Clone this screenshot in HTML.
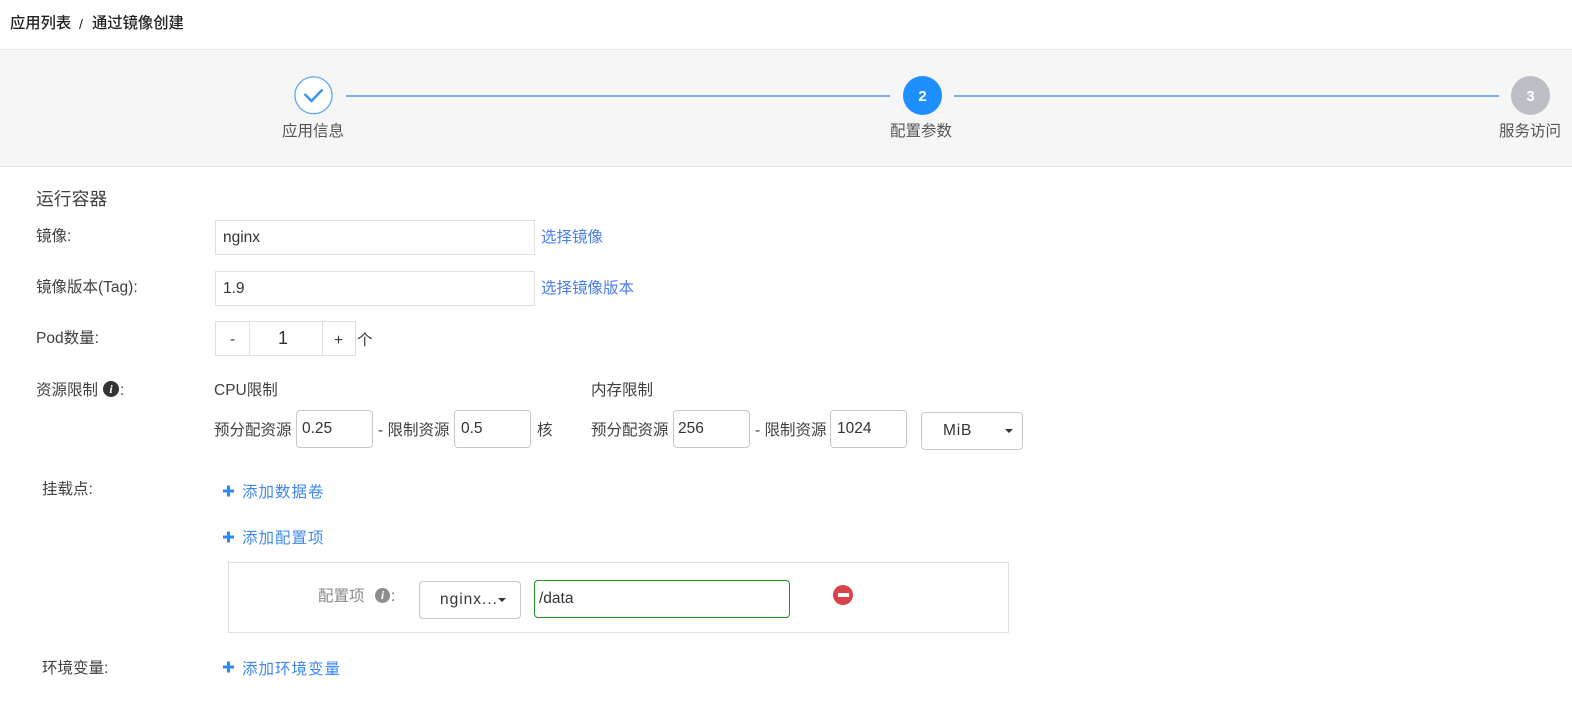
<!DOCTYPE html>
<html><head><meta charset="utf-8">
<style>
html,body{margin:0;padding:0;width:1572px;height:708px;overflow:hidden;background:#fff}
#w{position:absolute;left:0;top:0;width:1572px;height:708px;overflow:hidden;background:#fff;filter:blur(.3px);font-family:"Liberation Sans","Noto Sans CJK SC",sans-serif;color:#404040;font-size:15.5px}
.a{position:absolute;white-space:nowrap;line-height:20px}
.b{position:absolute;box-sizing:border-box;background:#fff}
.in{border:1px solid #dfdfdf}
.r{border:1px solid #c8c8c8;border-radius:4px}
.l{color:#4a7df0}
.p{color:#3d88f0;letter-spacing:1px}
.car{position:absolute;width:0;height:0;border-left:4.5px solid transparent;border-right:4.5px solid transparent;border-top:4.5px solid #333}
</style></head><body><div id="w">
<div class="a" style="left:10px;top:14px;font-weight:500;color:#222;font-size:15.3px">应用列表</div>
<div class="a" style="left:79px;top:14px;font-weight:500;color:#222;font-size:14px">/</div>
<div class="a" style="left:92px;top:14px;font-weight:500;color:#222;font-size:15.3px">通过镜像创建</div>
<div class="b" style="left:0;top:49px;width:1572px;height:118px;background:#f6f6f6;border-top:1px solid #e6e9ee;border-bottom:1px solid #e2e6ec"></div>

<svg class="b" style="left:293px;top:76px;background:none" width="41" height="39" viewBox="0 0 41 39"><ellipse cx="20.5" cy="19.3" rx="18.6" ry="18.4" fill="#fff" stroke="#5ca7f5" stroke-width="1.3"/><path d="M11.5 18L18.5 25L29.5 13.5" fill="none" stroke="#3b92f0" stroke-width="2.4"/></svg>
<div class="b" style="left:346px;top:95px;width:544px;height:2px;background:#78b1f3"></div>
<div class="b" style="left:954px;top:95px;width:545px;height:2px;background:#78b1f3"></div>
<div class="b" style="left:903px;top:76px;width:39px;height:39px;border-radius:50%;background:#1e8fff;color:#fff;font-weight:bold;font-size:15px;text-align:center;line-height:41px">2</div>
<div class="b" style="left:1511px;top:76px;width:39px;height:39px;border-radius:50%;background:#bcbfc5;color:#fff;font-weight:bold;font-size:15px;text-align:center;line-height:41px">3</div>
<div class="a" style="left:282px;top:122px;color:#555">应用信息</div>
<div class="a" style="left:890px;top:122px;color:#555">配置参数</div>
<div class="a" style="left:1499px;top:122px;color:#555">服务访问</div>

<div class="a" style="left:36px;top:189px;font-size:17.8px">运行容器</div>
<div class="a" style="left:36px;top:227px">镜像:</div>
<div class="b in" style="left:215px;top:220px;width:320px;height:35px"></div>
<div class="a" style="left:223px;top:228px;color:#333">nginx</div>
<div class="a l" style="left:541px;top:228px">选择镜像</div>
<div class="a" style="left:36px;top:278px">镜像版本(Tag):</div>
<div class="b in" style="left:215px;top:271px;width:320px;height:35px"></div>
<div class="a" style="left:223px;top:279px;color:#333">1.9</div>
<div class="a l" style="left:541px;top:279px">选择镜像版本</div>
<div class="a" style="left:36px;top:329px">Pod数量:</div>
<div class="b in" style="left:215px;top:321px;width:141px;height:35px"></div>
<div class="b" style="left:249px;top:322px;width:1px;height:33px;background:#dfdfdf"></div>
<div class="b" style="left:322px;top:322px;width:1px;height:33px;background:#dfdfdf"></div>
<div class="a" style="left:230px;top:330px">-</div>
<div class="a" style="left:278px;top:328px;font-size:18px;color:#333">1</div>
<div class="a" style="left:334px;top:331px">+</div>
<div class="a" style="left:357px;top:331px">个</div>

<div class="a" style="left:36px;top:381px">资源限制</div>
<div class="b" style="left:103px;top:381px;width:16px;height:16px;border-radius:50%;background:#333;color:#fff;font:bold italic 12px/16px 'Liberation Serif',serif;text-align:center">i</div>
<div class="a" style="left:120px;top:381px">:</div>
<div class="a" style="left:214px;top:381px">CPU限制</div>
<div class="a" style="left:214px;top:421px">预分配资源</div>
<div class="b r" style="left:296px;top:410px;width:77px;height:38px"></div>
<div class="a" style="left:302px;top:419px;color:#333">0.25</div>
<div class="a" style="left:378px;top:421px">- 限制资源</div>
<div class="b r" style="left:454px;top:410px;width:77px;height:38px"></div>
<div class="a" style="left:461px;top:419px;color:#333">0.5</div>
<div class="a" style="left:537px;top:421px">核</div>

<div class="a" style="left:591px;top:381px">内存限制</div>
<div class="a" style="left:591px;top:421px">预分配资源</div>
<div class="b r" style="left:673px;top:410px;width:77px;height:38px"></div>
<div class="a" style="left:678px;top:419px;color:#333">256</div>
<div class="a" style="left:755px;top:421px">- 限制资源</div>
<div class="b r" style="left:830px;top:410px;width:77px;height:38px"></div>
<div class="a" style="left:837px;top:419px;color:#333">1024</div>
<div class="b r" style="left:921px;top:412px;width:102px;height:38px"></div>
<div class="a" style="left:943px;top:421px;color:#333;letter-spacing:.8px">MiB</div>
<div class="car" style="left:1005px;top:429px"></div>

<div class="a" style="left:42px;top:480px">挂载点:</div>
<svg class="b" style="left:222px;top:485px;background:none" width="13" height="12"><path d="M6.5 0.5V11.5M1 6H12" stroke="#2a8bf2" stroke-width="3"/></svg>
<div class="a p" style="left:242px;top:483px">添加数据卷</div>
<svg class="b" style="left:222px;top:531px;background:none" width="13" height="12"><path d="M6.5 0.5V11.5M1 6H12" stroke="#2a8bf2" stroke-width="3"/></svg>
<div class="a p" style="left:242px;top:529px">添加配置项</div>

<div class="b" style="left:228px;top:562px;width:781px;height:71px;border:1px solid #dde0e6"></div>
<div class="a" style="left:318px;top:587px;color:#888">配置项</div>
<div class="b" style="left:375px;top:588px;width:15px;height:15px;border-radius:50%;background:#8d8d8d;color:#fff;font:bold italic 12px/15px 'Liberation Serif',serif;text-align:center">i</div>
<div class="a" style="left:391px;top:587px;color:#666">:</div>
<div class="b r" style="left:419px;top:581px;width:102px;height:38px"></div>
<div class="a" style="left:440px;top:590px;color:#333;letter-spacing:1px">nginx...</div>
<div class="car" style="left:498px;top:598px"></div>
<div class="b" style="left:534px;top:580px;width:256px;height:38px;border:1px solid #1f9425;border-radius:4px"></div>
<div class="a" style="left:539px;top:589px;color:#333">/data</div>
<div class="b" style="left:833px;top:585px;width:20px;height:20px;border-radius:50%;background:#d9434a"></div>
<div class="b" style="left:838px;top:593px;width:11px;height:4px;background:#fff"></div>

<div class="a" style="left:42px;top:659px">环境变量:</div>
<svg class="b" style="left:222px;top:661px;background:none" width="13" height="12"><path d="M6.5 0.5V11.5M1 6H12" stroke="#2a8bf2" stroke-width="3"/></svg>
<div class="a p" style="left:242px;top:660px">添加环境变量</div>
</div></body></html>
